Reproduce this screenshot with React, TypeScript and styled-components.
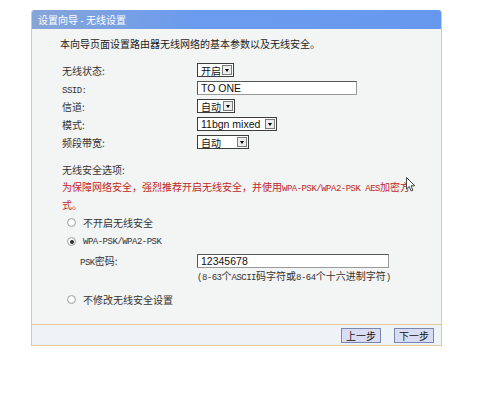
import React from "react";
import styled, { createGlobalStyle } from "styled-components";

const Global = createGlobalStyle`
  html, body { margin: 0; padding: 0; background: #ffffff; }
  body { font-family: "Noto Sans CJK SC", sans-serif; color: #222; }
`;

const Page = styled.div`
  position: relative;
  width: 500px;
  height: 414px;
  padding: 10px 0 0 31px;
  box-sizing: border-box;
`;

const Panel = styled.div`
  width: 409px;
  border: 1px solid #e2c79e;
  border-top: none;
  border-radius: 3px 3px 0 0;
  overflow: hidden;
`;

const TitleBar = styled.div`
  height: 19px;
  display: flex;
  align-items: center;
  padding-left: 6px;
  background: linear-gradient(to right, #86a5d8, #6b9bef 40%, #6699ee);
  color: #ffffff;
  font-size: 10px;
  white-space: pre;
`;

const Main = styled.div`
  height: 295px;
  box-sizing: border-box;
  background: #f3f4f4;
  padding: 8px 0 0 28px;
  display: flex;
  flex-direction: column;
`;

const Intro = styled.div`
  font-size: 10px;
  line-height: 14px;
  color: #222;
`;

const FormGrid = styled.div`
  display: grid;
  grid-template-columns: 135px auto;
  grid-auto-rows: 18px;
  align-items: center;
  margin-top: 10px;
  padding-left: 2px;
  font-size: 10px;
  color: #333;
`;

const Label = styled.span`
  font-size: 10px;
  color: #333;
`;

const Mono = styled.span`
  font-family: "Liberation Mono", monospace;
  font-size: 9px;
  letter-spacing: -0.5px;
`;

const SelectBox = styled.div<{ $w: number }>`
  display: inline-flex;
  align-items: center;
  justify-content: space-between;
  justify-self: start;
  width: ${(p) => p.$w}px;
  height: 14px;
  box-sizing: border-box;
  border: 1px solid #3d3d3d;
  background: #ffffff;
  padding: 0 1px 0 3px;
  font-size: 10px;
  color: #111;
`;

const SansText = styled.span`
  font-family: "Liberation Sans", sans-serif;
  font-size: 10.5px;
`;

const DropBtn = styled.span`
  width: 10px;
  height: 10px;
  box-sizing: border-box;
  border: 1px solid #7b7b7b;
  background: #ececec;
  display: flex;
  align-items: center;
  justify-content: center;
  &::after {
    content: "";
    border-left: 2.5px solid transparent;
    border-right: 2.5px solid transparent;
    border-top: 3px solid #000;
  }
`;

const TextInput = styled.div<{ $w: number }>`
  justify-self: start;
  width: ${(p) => p.$w}px;
  height: 14px;
  box-sizing: border-box;
  border: 1px solid #555;
  border-right-color: #999;
  border-bottom-color: #999;
  background: #ffffff;
  padding-left: 3px;
  display: flex;
  align-items: center;
  font-family: "Liberation Sans", sans-serif;
  font-size: 10.5px;
  color: #111;
`;

const SectionTitle = styled.div`
  margin-top: 12px;
  padding-left: 2px;
  font-size: 10px;
  line-height: 14px;
  color: #333;
`;

const Warning = styled.div`
  margin-top: 2px;
  padding-left: 2px;
  font-size: 10px;
  line-height: 16px;
  color: #c0262b;
  white-space: nowrap;
`;

const RadioRow = styled.div<{ $gapTop?: number }>`
  height: 19px;
  margin-top: ${(p) => p.$gapTop ?? 0}px;
  display: flex;
  align-items: center;
  gap: 7px;
  padding-left: 7px;
  font-size: 10px;
  color: #333;
`;

const Radio = styled.span<{ $on?: boolean }>`
  width: 9px;
  height: 9px;
  box-sizing: border-box;
  border-radius: 50%;
  border: 1px solid #a3a3a3;
  background: radial-gradient(circle, #ffffff 40%, #dcdcdc);
  display: flex;
  align-items: center;
  justify-content: center;
  &::after {
    content: "";
    width: 4px;
    height: 4px;
    border-radius: 50%;
    background: ${(p) => (p.$on ? "#2c2c2c" : "transparent")};
  }
`;

const PskRow = styled.div`
  margin-top: 1px;
  height: 17px;
  display: grid;
  grid-template-columns: 117px auto;
  align-items: center;
  padding-left: 20px;
  font-size: 10px;
  color: #333;
`;

const Hint = styled.div`
  padding-left: 137px;
  font-size: 10px;
  line-height: 14px;
  color: #333;
  white-space: nowrap;
`;

const Footer = styled.div`
  height: 20px;
  border-top: 1px solid #e2c79e;
  background: #eef3f8;
  display: flex;
  justify-content: flex-end;
  align-items: center;
  gap: 13px;
  padding-right: 7px;
`;

const StepButton = styled.button`
  width: 40px;
  height: 15px;
  padding: 0;
  box-sizing: border-box;
  border: 1px solid #7b86b0;
  background: #d9ddf3;
  font-family: "Noto Sans CJK SC", sans-serif;
  font-size: 10px;
  line-height: 13px;
  color: #111;
`;

const Cursor = styled.svg`
  position: absolute;
  left: 406px;
  top: 177px;
`;

export default function App() {
  return (
    <Page>
      <Global />
      <Panel>
        <TitleBar>设置向导 - 无线设置</TitleBar>
        <Main>
          <Intro>本向导页面设置路由器无线网络的基本参数以及无线安全。</Intro>
          <FormGrid>
            <Label>无线状态:</Label>
            <SelectBox $w={37}>
              开启
              <DropBtn />
            </SelectBox>
            <Label>
              <Mono>SSID:</Mono>
            </Label>
            <TextInput $w={160}>TO ONE</TextInput>
            <Label>信道:</Label>
            <SelectBox $w={38}>
              自动
              <DropBtn />
            </SelectBox>
            <Label>模式:</Label>
            <SelectBox $w={80}>
              <SansText>11bgn mixed</SansText>
              <DropBtn />
            </SelectBox>
            <Label>频段带宽:</Label>
            <SelectBox $w={52}>
              自动
              <DropBtn />
            </SelectBox>
          </FormGrid>
          <SectionTitle>无线安全选项:</SectionTitle>
          <Warning>
            为保障网络安全，强烈推荐开启无线安全，并使用<Mono>WPA-PSK/WPA2-PSK AES</Mono>加密方
            <br />
            式。
          </Warning>
          <RadioRow>
            <Radio />
            不开启无线安全
          </RadioRow>
          <RadioRow>
            <Radio $on />
            <Mono>WPA-PSK/WPA2-PSK</Mono>
          </RadioRow>
          <PskRow>
            <span>
              <Mono>PSK</Mono>密码:
            </span>
            <TextInput $w={192}>12345678</TextInput>
          </PskRow>
          <Hint>
            <Mono>(8-63</Mono>个<Mono>ASCII</Mono>码字符或<Mono>8-64</Mono>个十六进制字符<Mono>)</Mono>
          </Hint>
          <RadioRow $gapTop={5}>
            <Radio />
            不修改无线安全设置
          </RadioRow>
        </Main>
        <Footer>
          <StepButton>上一步</StepButton>
          <StepButton>下一步</StepButton>
        </Footer>
      </Panel>
      <Cursor width="10" height="15" viewBox="0 0 10 15">
        <path d="M0.5 0.5 L0.5 12 L3.2 9.4 L5.2 14 L6.9 13.3 L5 8.8 L8.8 8.8 Z" fill="#ffffff" stroke="#333" strokeWidth="0.9" />
      </Cursor>
    </Page>
  );
}
